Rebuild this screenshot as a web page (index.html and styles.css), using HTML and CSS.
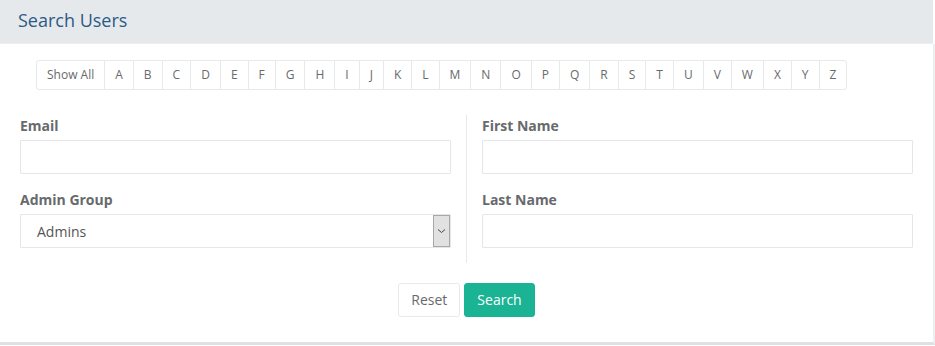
FILE: index.html
```html
<!DOCTYPE html>
<html lang="en">

<head>
    <meta charset="UTF-8">
    <meta name="viewport" content="width=device-width, initial-scale=1.0">
    <title>Search Users</title>
    <link rel="stylesheet" href="styles.css">
</head>

<body>

    <div class="panel">
        <div class="panel-title">
            <h5>Search Users</h5>
        </div>

        <div class="panel-content">
            <ul class="letters">
                <li>Show All</li>
                <li>A</li><li>B</li><li>C</li><li>D</li><li>E</li><li>F</li><li>G</li>
                <li>H</li><li>I</li><li>J</li><li>K</li><li>L</li><li>M</li><li>N</li>
                <li>O</li><li>P</li><li>Q</li><li>R</li><li>S</li><li>T</li><li>U</li>
                <li>V</li><li>W</li><li>X</li><li>Y</li><li>Z</li>
            </ul>

            <div class="form-row">
                <div class="col col-left">
                    <div class="form-group">
                        <label for="email">Email</label>
                        <input type="text" id="email">
                    </div>
                    <div class="form-group">
                        <label for="admin-group">Admin Group</label>
                        <div class="select-wrap">
                            <select id="admin-group">
                                <option>Admins</option>
                            </select>
                            <span class="select-arrow">
                                <svg width="9" height="6" viewBox="0 0 9 6"><path d="M1 1.5 L4.5 4.5 L8 1.5" fill="none" stroke="#444" stroke-width="1"/></svg>
                            </span>
                        </div>
                    </div>
                </div>

                <div class="col col-right">
                    <div class="form-group">
                        <label for="first-name">First Name</label>
                        <input type="text" id="first-name">
                    </div>
                    <div class="form-group">
                        <label for="last-name">Last Name</label>
                        <input type="text" id="last-name">
                    </div>
                </div>
            </div>

            <div class="actions">
                <button class="btn btn-white">Reset</button>
                <button class="btn btn-primary">Search</button>
            </div>
        </div>
    </div>

</body>

</html>
```

FILE: styles.css
```css
body {
    font-family: 'Open Sans', sans-serif;
    font-size: 13px;
    color: #676a6c;
    background-color: #ffffff;
    margin: 0;
    padding: 0;
}

.panel {
    width: 935px;
    box-sizing: border-box;
}

.panel-title {
    background-color: #e6e9ec;
    border-bottom: 1px solid #eceff1;
    height: 44px;
    box-sizing: border-box;
    margin-right: 2px;
    padding: 0 18px;
    display: flex;
    align-items: center;
}

.panel-title h5 {
    margin: 0;
    font-size: 18px;
    font-weight: 400;
    color: #2d5a85;
    line-height: 1;
    position: relative;
    top: -2px;
}

.panel-content {
    padding: 16px 20px 25px 20px;
    border-right: 2px solid #eceef0;
    border-bottom: 3px solid #dde1e5;
}

.letters {
    display: flex;
    list-style: none;
    margin: 0 0 0 16px;
    padding: 0;
}

.letters li {
    font-size: 12px;
    line-height: 18px;
    padding: 5px 10px;
    color: #676a6c;
    border: 1px solid #e7eaec;
    margin-left: -1px;
}

.letters li:first-child {
    margin-left: 0;
    border-radius: 3px 0 0 3px;
}

.letters li:last-child {
    border-radius: 0 3px 3px 0;
}

.form-row {
    display: flex;
    margin-top: 25px;
}

.col {
    flex: 1;
}

.col-left {
    padding-right: 15px;
    border-right: 1px solid #e7eaec;
}

.col-right {
    padding-left: 15px;
}

.form-group {
    margin-bottom: 15px;
}

label {
    display: block;
    font-size: 14px;
    font-weight: 700;
    line-height: 20px;
    padding-top: 1px;
    margin-bottom: 4px;
    color: #676a6c;
}

input,
select {
    display: block;
    width: 100%;
    height: 34px;
    box-sizing: border-box;
    border: 1px solid #e5e6e7;
    border-radius: 1px;
    font-family: 'Open Sans', sans-serif;
    font-size: 14px;
    color: #555;
    padding: 6px 12px;
    background: #fff;
    outline: none;
}

.select-wrap {
    position: relative;
}

select {
    appearance: none;
    -webkit-appearance: none;
    padding-left: 16px;
}

.select-arrow {
    position: absolute;
    top: 1px;
    right: 1px;
    width: 17px;
    height: 32px;
    box-sizing: border-box;
    background-color: #e1e1e1;
    border: 1px solid #a8a8a8;
    display: flex;
    align-items: center;
    justify-content: center;
}

.actions {
    display: flex;
    justify-content: center;
    gap: 4px;
    margin-top: 20px;
}

.btn {
    font-family: 'Open Sans', sans-serif;
    font-size: 14px;
    line-height: 20px;
    padding: 6px 12px;
    border-radius: 3px;
    cursor: pointer;
}

.btn-white {
    background-color: #fff;
    color: #676a6c;
    border: 1px solid #e7eaec;
}

.btn-primary {
    background-color: #1ab394;
    color: #fff;
    border: 1px solid #1ab394;
}
```
